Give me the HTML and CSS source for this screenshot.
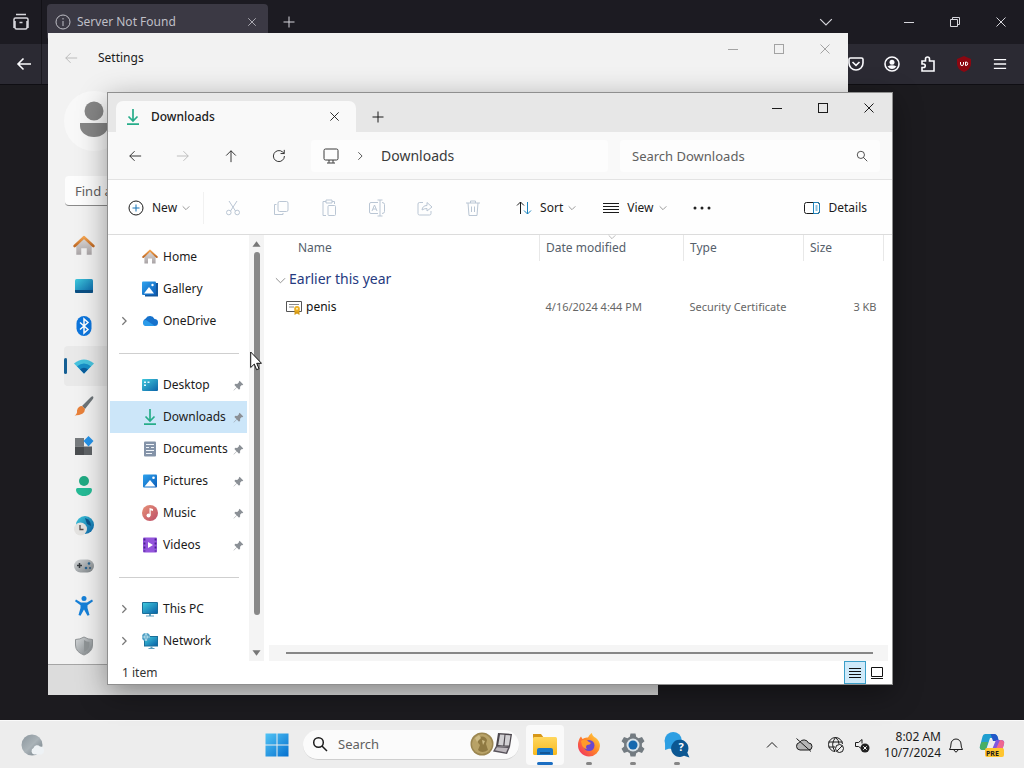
FILE: index.html
```html
<!DOCTYPE html>
<html lang="en">
<head>
<meta charset="utf-8">
<title>Desktop</title>
<link rel="stylesheet" href="styles.css">
</head>
<body>
<svg class="defs" width="0" height="0" aria-hidden="true">
  <defs>
    <linearGradient id="g-roof" x1="0" y1="0" x2="0" y2="1"><stop offset="0" stop-color="#f3a34f"/><stop offset="1" stop-color="#c06a25"/></linearGradient>
    <linearGradient id="g-wall" x1="0" y1="0" x2="0" y2="1"><stop offset="0" stop-color="#dcd8d6"/><stop offset="1" stop-color="#a9a4a6"/></linearGradient>
    <linearGradient id="g-teal" x1="0" y1="0" x2="1" y2="1"><stop offset="0" stop-color="#3fc9dc"/><stop offset="1" stop-color="#0b63a8"/></linearGradient>
    <linearGradient id="g-blue" x1="0" y1="0" x2="1" y2="1"><stop offset="0" stop-color="#2fa3ee"/><stop offset="1" stop-color="#0a5cb8"/></linearGradient>
    <linearGradient id="g-win" x1="0" y1="0" x2="1" y2="1"><stop offset="0" stop-color="#52c4f5"/><stop offset="1" stop-color="#0570cf"/></linearGradient>
    <linearGradient id="g-music" x1="0" y1="0" x2="1" y2="1"><stop offset="0" stop-color="#e79277"/><stop offset="1" stop-color="#bd4d68"/></linearGradient>
    <linearGradient id="g-fire" x1="1" y1="0" x2="0" y2="1"><stop offset="0" stop-color="#ffe14a"/><stop offset=".45" stop-color="#ff8a26"/><stop offset="1" stop-color="#f0246a"/></linearGradient>
    <linearGradient id="g-folder" x1="0" y1="0" x2="0" y2="1"><stop offset="0" stop-color="#ffd75e"/><stop offset="1" stop-color="#f7b91e"/></linearGradient>
    <linearGradient id="g-gray" x1="0" y1="0" x2="1" y2="1"><stop offset="0" stop-color="#d5d8da"/><stop offset="1" stop-color="#7d8386"/></linearGradient>
    <linearGradient id="g-moon" x1="0" y1="0" x2="1" y2="1"><stop offset="0" stop-color="#8b969d"/><stop offset=".5" stop-color="#aab3b8"/><stop offset="1" stop-color="#6f7a82"/></linearGradient>
  </defs>
  <symbol id="min" viewBox="0 0 12 12"><path d="M1 6.5h10"/></symbol>
  <symbol id="max" viewBox="0 0 12 12"><rect x="1.5" y="1.5" width="9" height="9"/></symbol>
  <symbol id="close" viewBox="0 0 12 12"><path d="M1.5 1.5l9 9M10.500 1.500l-9 9"/></symbol>
  <symbol id="restore" viewBox="0 0 12 12"><path d="M1.500 3.500h7v7h-7zM3.500 3.500v-2h7v7h-2"/></symbol>
  <symbol id="plus" viewBox="0 0 12 12"><path d="M6 .5v11M.5 6h11"/></symbol>
  <symbol id="left" viewBox="0 0 16 16"><path d="M15 8H2M7.500 2.500L2 8l5.500 5.500"/></symbol>
  <symbol id="right" viewBox="0 0 16 16"><path d="M1 8h13M8.500 2.500L14 8l-5.500 5.500"/></symbol>
  <symbol id="up" viewBox="0 0 16 16"><path d="M8 15V2M2.500 7.500L8 2l5.500 5.500"/></symbol>
  <symbol id="chev-d" viewBox="0 0 12 12"><path d="M1 3.500l5 5 5-5"/></symbol>
  <symbol id="chev-r" viewBox="0 0 12 12"><path d="M4 1.500L8.500 6 4 10.500"/></symbol>
  <symbol id="lens" viewBox="0 0 16 16"><circle cx="6.500" cy="6.500" r="4.800"/><path d="M10 10l5 5"/></symbol>
  <symbol id="pin" viewBox="0 0 12 12"><path fill="#8b9096" stroke="none" d="M7.200.8l4 4-1 .8-.6-.1-1.900 1.900.1 2-1.200 1.100-2.400-2.400L.9 11.400l-.3-.3 3.300-3.300L1.500 5.400l1.100-1.200 2 .1 1.900-1.900-.1-.6z"/></symbol>
  <symbol id="house" viewBox="0 0 20 20"><path fill="url(#g-wall)" d="M3 9l7-6 7 6v9h-4.500v-6h-5v6H3z"/><path fill="none" stroke="url(#g-roof)" stroke-width="2.400" stroke-linejoin="round" stroke-linecap="round" d="M1.500 10L10 2l8.500 8"/></symbol>
  <symbol id="down-arrow" viewBox="0 0 16 16"><path fill="none" stroke="#27ad8a" stroke-width="1.700" d="M8 0v11.500M3.500 7.500L8 12l4.500-4.500M2 15.100h12"/></symbol>
  <symbol id="picture" viewBox="0 0 16 16"><rect x="1" y="1.500" width="14" height="13" rx="1" fill="url(#g-blue)"/><path fill="#fff" d="M2.500 13.500L8 7l5.500 6.500z"/><circle cx="11.500" cy="4.800" r="1.300" fill="#fff"/></symbol>
</svg>

<main class="desktop">
  <section class="firefox" aria-label="Browser">
    <div class="ff-tabs">
      <button class="ff-archive" aria-label="Recent"><svg viewBox="0 0 18 18" width="18" height="18"><path d="M4 1.500h10M3 8v6.500A1.500 1.500 0 0 0 4.500 16h9a1.500 1.500 0 0 0 1.500-1.500V8M2 8V6.500A1.500 1.500 0 0 1 3.500 5h11A1.500 1.500 0 0 1 16 6.500V15M2 6v9M7.500 9.500h3"/></svg></button>
      <div class="ff-tab">
        <svg viewBox="0 0 16 16" width="16" height="16"><circle cx="8" cy="8" r="7"/><path d="M8 7v5M8 4v1.500"/></svg>
        <span>Server Not Found</span>
        <button aria-label="Close tab"><svg width="10" height="10"><use href="#close"/></svg></button>
      </div>
      <button class="ff-new" aria-label="New tab"><svg width="12" height="12"><use href="#plus"/></svg></button>
      <button class="ff-list" aria-label="List tabs"><svg width="14" height="14"><use href="#chev-d"/></svg></button>
      <div class="controls">
        <button aria-label="Minimize"><svg width="12" height="12"><use href="#min"/></svg></button>
        <button aria-label="Restore"><svg width="12" height="12"><use href="#restore"/></svg></button>
        <button aria-label="Close"><svg width="12" height="12"><use href="#close"/></svg></button>
      </div>
    </div>
    <div class="ff-nav">
      <button class="ff-back" aria-label="Back"><svg width="16" height="16"><use href="#left"/></svg></button>
      <div class="ff-tools">
        <button aria-label="Pocket"><svg viewBox="0 0 16 16" width="16" height="16"><path d="M2.500 2h11a1.500 1.500 0 0 1 1.500 1.500V7A7 7 0 0 1 1 7V3.500A1.500 1.500 0 0 1 2.500 2zM4.500 6L8 9.300 11.500 6"/></svg></button>
        <button aria-label="Account"><svg viewBox="0 0 16 16" width="16" height="16"><circle cx="8" cy="8" r="7"/><circle cx="8" cy="6.200" r="2.500" fill="currentColor" stroke="none"/><path fill="currentColor" stroke="none" d="M3.500 10.500q4.500-2.500 9 0Q8 15.500 3.500 10.500z"/></svg></button>
        <button aria-label="Extensions"><svg viewBox="0 0 16 16" width="16" height="16"><path d="M2 5h3.500V3a2 2 0 0 1 4 0v2H14v10H2v-3.500h1.500a1.700 1.700 0 0 0 0-3.500H2z"/></svg></button>
        <button class="ublock" aria-label="Blocker"><svg viewBox="0 0 16 16" width="16" height="16"><path class="shield" d="M8 0l7 3v5q0 5-7 8-7-3-7-8V3z"/><path class="mark" d="M4.500 6v2.200q0 1.300 1.500 1.300T7.500 8.200V6M9.500 6h.5q1.700 0 1.700 1.700T10 9.500h-.5z"/></svg></button>
        <button aria-label="Menu"><svg viewBox="0 0 16 16" width="14" height="14"><path d="M1 3h14M1 8h14M1 13h14"/></svg></button>
      </div>
    </div>
    <div class="ff-page"></div>
  </section>

  <section class="back-window" aria-label="Background window"></section>

  <section class="settings" aria-label="Settings">
    <header class="set-head">
      <button class="set-back" aria-label="Back"><svg width="14" height="14"><use href="#left"/></svg></button>
      <h1>Settings</h1>
      <div class="controls">
        <button aria-label="Minimize"><svg width="12" height="12"><use href="#min"/></svg></button>
        <button aria-label="Maximize"><svg width="12" height="12"><use href="#max"/></svg></button>
        <button aria-label="Close"><svg width="12" height="12"><use href="#close"/></svg></button>
      </div>
    </header>
    <div class="avatar"><svg viewBox="0 0 60 60" width="60" height="60"><circle cx="30" cy="30" r="30" fill="#f8f8f8"/><circle cx="30" cy="20" r="9.500" fill="#868686"/><path fill="#868686" d="M16 32h28v3c0 6-6 11-14 11s-14-5-14-11z"/></svg></div>
    <input class="find" type="search" placeholder="Find a setting" aria-label="Find a setting">
    <nav class="set-nav">
      <a href="#home" aria-label="Home"><svg width="22" height="22"><use href="#house"/></svg></a>
      <a href="#system" aria-label="System"><svg viewBox="0 0 20 20" width="20" height="20"><rect x="1" y="3" width="18" height="14" rx="1.500" fill="url(#g-teal)"/><path fill="#0b4f83" d="M1 14h18v1.500a1.500 1.500 0 0 1-1.500 1.500h-15A1.500 1.500 0 0 1 1 15.500z"/></svg></a>
      <a href="#bluetooth" aria-label="Bluetooth"><svg viewBox="0 0 20 20" width="20" height="20"><rect x="2.500" y="0" width="15" height="20" rx="7.500" fill="#0d75dc"/><path fill="none" stroke="#fff" stroke-width="1.500" d="M6 6.500l8 7-4 3.500V3l4 3.500-8 7"/></svg></a>
      <a class="current" href="#network" aria-label="Network"><svg viewBox="0 0 20 20" width="20" height="20"><path fill="#48c3de" d="M0 7.500Q10-.5 20 7.500L10 17.500z"/><path fill="#198fc8" d="M3 10.300q7-5.500 14 0L10 17.500z"/><path fill="#0b5c9c" d="M6 13.200q4-3 8 0l-4 4.300z"/></svg></a>
      <a href="#personal" aria-label="Personalization"><svg viewBox="0 0 20 20" width="20" height="20"><path fill="#6d7478" d="M19 .5q1 1-.5 3L11 13l-3-3 8-8q2-2.300 3-1.500z"/><path fill="#e8813a" d="M8 10l3 3q0 6-10.500 6.500Q3.500 18 3 14.500 4 10 8 10z"/></svg></a>
      <a href="#apps" aria-label="Apps"><svg viewBox="0 0 20 20" width="20" height="20"><path fill="#777b7e" d="M1 2h9v8.500H1z"/><path fill="#4b4e51" d="M1 10.500h9V19H1z"/><path fill="#5f6366" d="M10 10.500h8V19h-8z"/><path fill="#2492e8" d="M14.500 0l5 5-5 5.500-5-5.500z"/></svg></a>
      <a href="#accounts" aria-label="Accounts"><svg viewBox="0 0 20 20" width="20" height="20"><circle cx="10" cy="5" r="5" fill="#20aa83"/><path fill="#25bb96" d="M2 13.500A1.500 1.500 0 0 1 3.500 12h13a1.500 1.500 0 0 1 1.500 1.500c0 4-3.500 6.500-8 6.500s-8-2.500-8-6.500z"/></svg></a>
      <a href="#time" aria-label="Time"><svg viewBox="0 0 20 20" width="20" height="20"><circle cx="11" cy="9" r="9" fill="url(#g-teal)"/><path fill="#0b568c" d="M11 2q6 2 6 8l-4-2z"/><circle cx="6.500" cy="13" r="6.500" fill="#e4e3e1"/><path fill="none" stroke="#574d4b" stroke-width="1.300" d="M6 9v4.500h3.500"/></svg></a>
      <a href="#gaming" aria-label="Gaming"><svg viewBox="0 0 20 20" width="20" height="20"><rect y="3.500" width="20" height="13" rx="6.500" fill="url(#g-gray)"/><path fill="none" stroke="#34393d" stroke-width="1.500" d="M3 9.500h5M5.500 7v5"/><circle cx="12" cy="12" r="1.300" fill="#27618d"/><circle cx="15" cy="7.500" r="1.300" fill="#27618d"/><circle cx="16" cy="12" r="1" fill="#315777"/></svg></a>
      <a href="#access" aria-label="Accessibility"><svg viewBox="0 0 20 20" width="20" height="20"><circle cx="10" cy="2.500" r="2.500" fill="#1681d9"/><path fill="#1681d9" d="M2 3.500l5 3h6l5-3 1 1.700-5.500 4V12l2 7-2 .8L10 13.500l-3.500 6.300-2-.8 2-7V9.200L1 5.200z"/></svg></a>
      <a href="#privacy" aria-label="Privacy"><svg viewBox="0 0 20 20" width="20" height="20"><path fill="url(#g-gray)" stroke="#909496" d="M10 1q4 2.500 8.500 2.500V9q0 7-8.500 10Q1.500 16 1.500 9V3.500Q6 3.500 10 1z"/><path fill="#8f9496" d="M10 4v12q5-2 5.500-7V6Q12.500 6 10 4z"/></svg></a>
    </nav>
  </section>

  <section class="explorer" aria-label="Downloads">
    <header class="ex-head">
      <div class="ex-tab">
        <svg width="16" height="16"><use href="#down-arrow"/></svg>
        <span>Downloads</span>
        <button aria-label="Close tab"><svg width="11" height="11"><use href="#close"/></svg></button>
      </div>
      <button class="ex-new" aria-label="New tab"><svg width="12" height="12"><use href="#plus"/></svg></button>
      <div class="controls">
        <button aria-label="Minimize"><svg width="12" height="12"><use href="#min"/></svg></button>
        <button aria-label="Maximize"><svg width="12" height="12"><use href="#max"/></svg></button>
        <button aria-label="Close"><svg width="12" height="12"><use href="#close"/></svg></button>
      </div>
    </header>

    <div class="ex-nav">
      <button aria-label="Back"><svg width="14" height="14"><use href="#left"/></svg></button>
      <button class="off" aria-label="Forward"><svg width="14" height="14"><use href="#right"/></svg></button>
      <button aria-label="Up"><svg width="14" height="14"><use href="#up"/></svg></button>
      <button aria-label="Refresh"><svg viewBox="0 0 16 16" width="14" height="14"><path d="M14.200 8A6.300 6.300 0 1 1 12 3.300l2 1.900M14 1v4.200H9.800"/></svg></button>
      <div class="address">
        <svg viewBox="0 0 16 16" width="16" height="16"><rect x="1" y="1" width="14" height="11" rx="1.500"/><path d="M6 12v2.800M10 12v2.800M4 15h8"/></svg>
        <svg width="10" height="10"><use href="#chev-r"/></svg>
        <span>Downloads</span>
      </div>
      <label class="search"><input type="text" placeholder="Search Downloads" aria-label="Search Downloads"><svg width="12" height="12"><use href="#lens"/></svg></label>
    </div>

    <div class="toolbar">
      <button class="t-new"><svg viewBox="0 0 16 16" width="16" height="16"><circle cx="8" cy="8" r="7"/><path stroke="#1773b5" d="M8 4.500v7M4.500 8h7"/></svg>New<svg class="caret" width="8" height="8"><use href="#chev-d"/></svg></button>
      <div class="t-icons">
        <button disabled aria-label="Cut"><svg viewBox="0 0 16 16" width="16" height="16"><path d="M4 1l6.500 10M12 1L5.500 11"/><circle cx="3.800" cy="12.500" r="2.300"/><circle cx="12.200" cy="12.500" r="2.300"/></svg></button>
        <button disabled aria-label="Copy"><svg viewBox="0 0 16 16" width="16" height="16"><rect x="5" y="1.500" width="10" height="10" rx="1.500"/><path d="M3.500 4.500H1.500v10h8.500v-1.500"/></svg></button>
        <button disabled aria-label="Paste"><svg viewBox="0 0 16 18" width="16" height="18"><path d="M5 16.500H2v-14h3M11 2.500h2.500V5M5 1h6v3H5z"/><rect x="7" y="6.500" width="7.500" height="10" rx="1"/></svg></button>
        <button disabled aria-label="Rename"><svg viewBox="0 0 18 18" width="18" height="18"><path d="M10 3.500H3A1.500 1.500 0 0 0 1.500 5v8A1.500 1.500 0 0 0 3 14.500h7M14 3.500q2.500 0 2.500 2v7q0 2-2.500 2M9.500 1h5M12 1v16M9.500 17h5M4 12l2.500-6L9 12M5 10h3"/></svg></button>
        <button disabled aria-label="Share"><svg viewBox="0 0 16 16" width="16" height="16"><path d="M6 2.500H2.500A1.500 1.500 0 0 0 1 4v9.500A1.500 1.500 0 0 0 2.500 15h10a1.500 1.500 0 0 0 1.500-1.500V11M5 10q.5-4.500 5-4.500v-3L15 7l-5 4V8.500Q7 8.500 5 10z"/></svg></button>
        <button disabled aria-label="Delete"><svg viewBox="0 0 16 18" width="16" height="18"><path d="M1 4h14M5.500 4V2h5v2M3 4l1 12.500h8L13 4M6.500 7.500v5.500M9.500 7.500v5.500"/></svg></button>
      </div>
      <button class="t-sort"><svg viewBox="0 0 16 16" width="16" height="16"><path d="M4.500 14V2M1 5.500L4.500 2 8 5.500"/><path stroke="#1b83bd" d="M11.500 2v12M8 10.500l3.500 3.500 3.500-3.500"/></svg>Sort<svg class="caret" width="8" height="8"><use href="#chev-d"/></svg></button>
      <button class="t-view"><svg viewBox="0 0 16 16" width="16" height="16"><path d="M0 3.500h16M0 6.500h16M0 9.500h16M0 12.500h16"/></svg>View<svg class="caret" width="8" height="8"><use href="#chev-d"/></svg></button>
      <button class="t-more" aria-label="More"><svg viewBox="0 0 18 4" width="18" height="4"><g fill="#222" stroke="none"><circle cx="2" cy="2" r="1.500"/><circle cx="9" cy="2" r="1.500"/><circle cx="16" cy="2" r="1.500"/></g></svg></button>
      <button class="t-details"><svg viewBox="0 0 16 16" width="16" height="16"><rect x=".5" y="2.500" width="15" height="11" rx="2"/><path stroke="#1b83bd" d="M9.500 2.500h4q2 0 2 2v7q0 2-2 2h-4zM11.500 6h2M11.500 8h2M11.500 10h2"/></svg>Details</button>
    </div>

    <div class="ex-body">
      <nav class="tree">
        <a href="#h"><i></i><svg width="16" height="16"><use href="#house"/></svg><span>Home</span></a>
        <a href="#g"><i></i><svg viewBox="0 0 16 16" width="16" height="16"><path fill="#13569c" d="M3 2h13v13.500H3z"/><rect y=".5" width="14" height="13.500" rx="1" fill="url(#g-blue)"/><path fill="#fff" d="M2 12.500L7 6l5 6.500z"/><circle cx="10.500" cy="4" r="1.200" fill="#fff"/></svg><span>Gallery</span></a>
        <a href="#o"><i><svg width="10" height="10"><use href="#chev-r"/></svg></i><svg viewBox="0 0 16 16" width="16" height="16"><path fill="#1672cc" d="M4 13a4 4 0 0 1-.3-7.500A5 5 0 0 1 12.500 6 3.500 3.500 0 0 1 12.500 13z"/><path fill="#2b9bea" d="M4 13a3 3 0 0 1 0-6l9 5.900z"/></svg><span>OneDrive</span></a>
        <hr>
        <a href="#d"><i></i><svg viewBox="0 0 16 16" width="16" height="16"><rect y="2" width="16" height="12" rx="1" fill="url(#g-teal)"/><path fill="#e5f8ff" d="M2 4.500h2v1.500H2zM2 7.500h2V9H2zM5.500 4.500h2v1.500h-2z"/></svg><span>Desktop</span><svg class="pin" width="11" height="11"><use href="#pin"/></svg></a>
        <a class="current" href="#dl"><i></i><svg width="16" height="16"><use href="#down-arrow"/></svg><span>Downloads</span><svg class="pin" width="11" height="11"><use href="#pin"/></svg></a>
        <a href="#doc"><i></i><svg viewBox="0 0 16 16" width="16" height="16"><rect x="2" y=".5" width="12" height="15" rx="1" fill="#8493a8"/><path fill="none" stroke="#f0f4f9" d="M4 3.500h8M4 6.500h3M9 6.500h3M4 9.500h8M4 12.500h6"/></svg><span>Documents</span><svg class="pin" width="11" height="11"><use href="#pin"/></svg></a>
        <a href="#pic"><i></i><svg width="16" height="16"><use href="#picture"/></svg><span>Pictures</span><svg class="pin" width="11" height="11"><use href="#pin"/></svg></a>
        <a href="#mus"><i></i><svg viewBox="0 0 16 16" width="16" height="16"><circle cx="8" cy="8" r="8" fill="url(#g-music)"/><circle cx="6.500" cy="10.500" r="2" fill="#fff"/><path fill="#fff" d="M7.500 3l3.500 1v2l-2.300-.7v5.200H7.500z"/></svg><span>Music</span><svg class="pin" width="11" height="11"><use href="#pin"/></svg></a>
        <a href="#vid"><i></i><svg viewBox="0 0 16 16" width="16" height="16"><rect x="1" y=".5" width="14" height="15" rx="1" fill="#9455dc"/><path fill="none" stroke="#4a2390" stroke-width="1.800" stroke-dasharray="2 2" d="M2.500 1.500v13M13.500 1.500v13"/><path fill="#fff" d="M6 5l5 3-5 3z"/></svg><span>Videos</span><svg class="pin" width="11" height="11"><use href="#pin"/></svg></a>
        <hr>
        <a href="#pc"><i><svg width="10" height="10"><use href="#chev-r"/></svg></i><svg viewBox="0 0 16 16" width="16" height="16"><rect y="1" width="16" height="12" rx="1" fill="#1b6f99"/><path fill="url(#g-teal)" d="M1 2h14v10H1z"/><path fill="#5b9dbd" d="M7 13h2v1.500h3v1H4v-1h3z"/></svg><span>This PC</span></a>
        <a href="#net"><i><svg width="10" height="10"><use href="#chev-r"/></svg></i><svg viewBox="0 0 16 16" width="16" height="16"><path fill="#1b6f99" d="M2 3h14v10.500H2z"/><path fill="url(#g-teal)" d="M3 4h12v8.500H3z"/><circle cx="4" cy="4" r="4" fill="#4f9fc4"/><path fill="none" stroke="#c1e4f0" stroke-width=".8" d="M0 4h8M4 0q-3 4 0 8 3-4 0-8"/><path fill="#5b9dbd" d="M8.500 13.500h2V15h2v1H6.500v-1h2z"/></svg><span>Network</span></a>
      </nav>
      <div class="vscroll" aria-hidden="true"><svg viewBox="0 0 10 6" width="9" height="6"><path d="M5 0l4.500 6h-9z"/></svg><div class="vthumb"></div><svg class="last" viewBox="0 0 10 6" width="9" height="6"><path d="M5 6L.5 0h9z"/></svg></div>
      <div class="files">
        <table>
          <colgroup><col><col class="c-date"><col class="c-type"><col class="c-size"></colgroup>
          <thead><tr><th>Name</th><th><svg class="sorted" width="8" height="8"><use href="#chev-d"/></svg>Date modified</th><th>Type</th><th>Size</th></tr></thead>
          <tbody>
            <tr class="group"><th colspan="4"><svg width="11" height="11"><use href="#chev-d"/></svg>Earlier this year</th></tr>
            <tr><td><div class="name"><svg viewBox="0 0 16 16" width="16" height="16"><path fill="#fff" stroke="#555" d="M.5 2.500h15v10H.5z"/><path stroke="#8a8a8a" d="M3 5.500h10M3 8h5"/><path fill="#d49a16" d="M8.500 10.500h5V16l-2.500-1.500L8.500 16z"/><circle cx="11" cy="9.800" r="2.800" fill="#edb021"/><circle cx="11" cy="9.800" r="1" fill="#fff4c4"/></svg>penis</div></td><td>4/16/2024 4:44 PM</td><td>Security Certificate</td><td>3 KB</td></tr>
          </tbody>
        </table>
        <div class="hscroll" aria-hidden="true"><div></div></div>
      </div>
    </div>
    <footer class="status">
      <span>1 item</span>
      <button class="on" aria-label="Details view"><svg viewBox="0 0 12 12" width="12" height="12"><path d="M0 1.500h12M0 4.500h12M0 7.500h12M0 10.500h12"/></svg></button>
      <button aria-label="Large icons"><svg viewBox="0 0 12 12" width="12" height="12"><path d="M.5 .5h11v9H.5zM0 11.500h12"/></svg></button>
    </footer>
  </section>

  <svg class="pointer" viewBox="0 0 12 20" width="12" height="20"><path fill="#fff" stroke="#111" d="M.7 1v15.500l3.600-3.400 2.300 5.600 2.400-1-2.300-5.400h4.800z"/></svg>
</main>

<footer class="taskbar">
  <div class="tb-left"><button aria-label="Weather"><svg viewBox="0 0 24 24" width="24" height="24"><circle cx="12" cy="12" r="10.500" fill="url(#g-moon)"/><path fill="#eef2f5" d="M14 21.500a3.500 3.500 0 0 1-.5-6.500 3.800 3.800 0 0 1 6.500-1.500 4 4 0 0 1 0 8z"/></svg></button></div>
  <button class="start" aria-label="Start"><svg viewBox="0 0 24 24" width="24" height="24"><path fill="url(#g-win)" d="M.5 .5h11v11H.5zM12.500 .5h11v11h-11zM.5 12.500h11v11H.5zM12.500 12.500h11v11h-11z"/></svg></button>
  <label class="tb-search"><svg width="16" height="16"><use href="#lens"/></svg><input type="text" placeholder="Search" aria-label="Search">
    <svg class="art" viewBox="0 0 44 26" width="44" height="26"><circle cx="13" cy="13" r="11.500" fill="#9b8650"/><circle cx="13" cy="13" r="10" fill="#b8a267"/><path fill="#8f7942" d="M10 6q6-2 8 3l-1 4 2 6q-6 4-10 0l2-5q-4-3-1-8z"/><path fill="#cdbb85" d="M6 7l4-3 2 3-4 4zM13 9l3 1-2 4z"/><path fill="#4c474d" d="M29 2l14 1-2 13-14-1z"/><path fill="#d2d1d4" d="M31 3.500l4.500.3-1.300 10.700-5-.4zM36.500 4l5 .3-1.500 10.300-4.500-.2z"/><path fill="#57525a" d="M27 15l14 1-3 7-14-2.500z"/><path fill="#bdb8bd" d="M28 16.200l11 .8-2 4.500-11-2.200z"/></svg></label>
  <div class="apps">
    <button class="active" aria-label="File Explorer"><svg viewBox="0 0 26 24" width="26" height="24"><path fill="#d79718" d="M1 1h8l3 4v5H1z"/><rect x="1" y="4" width="24" height="18" rx="1.500" fill="url(#g-folder)"/><path fill="#1a78c8" d="M5 17a2 2 0 0 1 2-2h12a2 2 0 0 1 2 2v5H5z"/><path fill="#125696" d="M8 19h10v2H8z"/></svg></button>
    <button aria-label="Firefox"><svg viewBox="0 0 24 24" width="24" height="24"><path fill="url(#g-fire)" d="M12 23.500A11 11 0 0 1 1 12Q1 7 4 3.500L5.500 6Q8 4 11 4.500 12 1.500 15 0q0 3 4 5 4 3.500 4 8A11 11 0 0 1 12 23.500z"/><circle cx="12" cy="12.500" r="5.500" fill="#6b48cf"/><path fill="#ff9a2b" d="M4 8q4-3 8 1l2 1q-1 2-4 2-2 2 0 4-5 0-6-8z"/></svg></button>
    <button aria-label="Settings"><svg viewBox="0 0 24 24" width="24" height="24"><path fill="#737b81" d="M9.500.5h5l.7 3.300 2.400 1.400L21 4l2.500 4.300-2.600 2.300v2.800l2.600 2.300L21 20l-3.400-1.200-2.400 1.400-.7 3.300h-5l-.7-3.300-2.400-1.400L3 20 .5 15.700l2.600-2.300v-2.800L.5 8.300 3 4l3.400 1.200 2.400-1.400z"/><circle cx="12" cy="12" r="6.500" fill="#d9e2e8"/><circle cx="12" cy="12" r="4.500" fill="#1668ae"/></svg></button>
    <button aria-label="Get Help"><svg viewBox="0 0 24 24" width="26" height="26"><circle cx="8.500" cy="8" r="8" fill="#2d9fe3"/><path fill="#2d9fe3" d="M1 10v6.500l6-2z"/><path fill="#0c5792" d="M23.500 23.500l-5-1.500a8 8 0 1 1 3-3z"/></svg><b>?</b></button>
  </div>
  <div class="tray">
    <button aria-label="Hidden icons"><svg class="flip" width="12" height="12"><use href="#chev-d"/></svg></button>
    <button aria-label="OneDrive"><svg viewBox="0 0 18 16" width="18" height="16"><path fill="#b5b5b5" d="M5 13a3.800 3.800 0 0 1-.5-7.500 5 5 0 0 1 9 .5 3.500 3.500 0 0 1 0 7z"/><path d="M1.500 1.500l14.500 13"/></svg></button>
    <button aria-label="No internet"><svg viewBox="0 0 18 18" width="18" height="18"><path d="M8 15.500A7 7 0 1 1 15.500 8M1.500 6h14M1.500 11H8M8.500 1.500Q3 8 8 15.500M8.500 1.500Q12 4 12 8"/><circle cx="12.500" cy="12.500" r="4"/><path d="M10 15l5-5"/></svg></button>
    <button class="sound" aria-label="Muted"><svg viewBox="0 0 16 16" width="16" height="16"><path d="M8 12L4.500 9.500H1.500v-4h3L8 2.500v4"/><circle cx="11" cy="11" r="4.500" fill="#222" stroke="none"/><path stroke="#fff" d="M9.300 9.300l3.400 3.400M12.700 9.300l-3.400 3.400"/></svg></button>
    <button class="clock"><span>8:02 AM</span><span>10/7/2024</span></button>
    <button class="bell" aria-label="Notifications"><svg viewBox="0 0 16 16" width="16" height="16"><path d="M1.500 12.500Q3 10.500 3 7a5 5 0 0 1 10 0q0 3.500 1.500 5.500zM6 13q2 4 4 0"/></svg></button>
    <button class="copilot" aria-label="Copilot"><svg viewBox="0 0 26 24" width="26" height="24"><path fill="#209fd0" d="M6 1h9q3 0 4 4h-8L7 17H4q-4 0-3-4L3.500 3.500Q4 1 6 1z"/><path fill="#48ae63" d="M2.500 9H9l-2.500 8H4q-4 0-3-4z"/><path fill="#2358c9" d="M11.500 1H15q3 0 4 4l1 3h-6z"/><path fill="#8058dd" d="M17 7h5q4 0 3 4l-2.500 8H12z"/><path fill="#ee6690" d="M21 7q5 0 4 4l-2 7h-7z"/><rect x="6" y="15" width="19" height="9" rx="2" fill="#ffc52f"/></svg><b>PRE</b></button>
  </div>
</footer>
</body>
</html>
```
FILE: styles.css
```css
* { box-sizing: border-box; }
body {
  margin: 0;
  height: 100vh;
  display: flex;
  flex-direction: column;
  overflow: hidden;
  background: #1b1a20;
  color: #1b1b1b;
  font: 12px/16px "Noto Sans", "Open Sans", sans-serif;
}
.defs { position: absolute; }
svg { flex: none; fill: none; stroke: currentColor; display: block; }
button {
  margin: 0; padding: 0; border: 0; background: none;
  color: inherit; font: inherit;
  display: flex; align-items: center; justify-content: center;
  flex: none;
}
input { font: inherit; color: inherit; border: 0; background: none; padding: 0; min-width: 0; outline: 0; }
input::placeholder { color: #606060; opacity: 1; }
a { color: inherit; text-decoration: none; }
.controls { display: flex; margin-left: auto; }
.controls button { width: 46px; height: 100%; }

.desktop { flex: 1; position: relative; min-height: 0; }

/* Browser */
.firefox { height: 100%; display: flex; flex-direction: column; color: #fbfbfe; }
.ff-tabs { height: 44px; display: flex; align-items: stretch; background: #1c1b22; color: #d6d6dc; }
.ff-archive { width: 42px; border-right: 1px solid #121116; }
.ff-archive svg { stroke-width: 1.5; }
.ff-tab {
  margin: 4px 0 4px 5px; padding: 0 8px; width: 221px;
  display: flex; align-items: center; gap: 6px;
  background: #3b3944; border-radius: 4px; color: #bfbfc6;
}
.ff-tab button { width: 16px; height: 16px; margin-left: auto; }
.ff-new { width: 42px; }
.ff-list { width: 40px; margin-left: auto; }
.ff-tabs .controls { margin-left: 40px; }
.ff-nav { height: 40px; display: flex; justify-content: space-between; background: #2b2a33; }
.ff-nav svg { stroke-width: 1.6; }
.ff-back { width: 42px; border-right: 1px solid #1a191f; padding-left: 6px; }
.ff-tools { display: flex; padding-right: 6px; }
.ff-tools button { width: 36px; }
.shield { fill: #8b0711; stroke: none; }
.mark { stroke: #fff; stroke-width: 1; }
.ff-page { flex: 1; border-top: 1px solid #0f0e13; background: #1c1b1f; }

/* Windows lying on the desktop */
.back-window {
  position: absolute; left: 48px; right: 366px; top: 93px; bottom: 25px;
  background: #dcdcdc;
}
.settings {
  position: absolute; left: 48px; right: 176px; top: 33px; bottom: 55px;
  background: #f2f2f2; border-bottom: 1px solid #a5a5a5; overflow: hidden;
}
.set-head { height: 50px; display: flex; align-items: center; }
.set-head h1 { margin: 0 0 0 15px; font-size: 12px; font-weight: 400; }
.set-back { width: 24px; margin-left: 11px; color: #b4b4b4; }
.set-head .controls { height: 32px; align-self: flex-start; color: #a3a3a3; }
.avatar { padding: 8px 0 0 16px; }
.avatar svg { stroke: none; }
.find {
  display: block; width: 220px; height: 30px; margin: 25px 0 20px 17px; padding: 0 10px;
  background: #fdfdfd; border-bottom: 1px solid #8a8a8a; border-radius: 4px; font-size: 13px;
}
.set-nav { padding-left: 16px; width: 236px; }
.set-nav a { height: 40px; padding-left: 8px; display: flex; align-items: center; }
.set-nav a > svg { stroke: none; margin: 0 2px; }
.set-nav a > svg[width="22"] { margin: 0 1px; }
.set-nav .current { background: #e9e9e9; border-radius: 4px; padding-left: 5px; }
.set-nav .current::before { content: ""; width: 3px; height: 16px; margin-left: -5px; margin-right: 5px; background: #155f94; border-radius: 2px; }

.explorer {
  position: absolute; left: 108px; right: 132px; top: 93px; bottom: 36px;
  display: flex; flex-direction: column; background: #fff;
  outline: 1px solid #8f8f8f;
  box-shadow: 0 8px 28px rgba(0, 0, 0, .42);
}
.ex-head { height: 39px; display: flex; background: #e7e7e7; }
.ex-tab {
  width: 240px; margin: 8px 0 0 8px; padding: 0 14px 0 9px;
  display: flex; align-items: center; gap: 10px;
  background: #f9f9f9; border-radius: 7px 7px 0 0; font-weight: 500;
}
.ex-tab button { width: 16px; height: 16px; margin-left: auto; }
.ex-new { width: 44px; padding-top: 8px; }
.ex-head .controls { height: 29px; }
.ex-nav {
  height: 48px; padding: 0 12px 0 3px; display: flex; align-items: center;
  background: #f9f9f9; border-bottom: 1px solid #e3e3e3;
}
.ex-nav > button { width: 48px; height: 32px; }
.ex-nav .off { color: #b6b6b6; }
.address, .search { height: 32px; background: #fdfdfd; border-radius: 4px; display: flex; align-items: center; }
.address { flex: 285; margin-left: 8px; padding-left: 12px; gap: 16px; font-size: 14px; color: #3a3a3a; }
.search { flex: 236; margin-left: 12px; padding: 0 12px; font-size: 13px; }
.search input { flex: 1; }

.toolbar { height: 55px; display: flex; align-items: center; padding: 2px 25px 0 20px; border-bottom: 1px solid #dcdcdc; background: #fefefe; }
.toolbar button { height: 32px; gap: 8px; }
.caret { color: #999; stroke-width: 1.5; margin-left: -3px; }
.t-icons { display: flex; margin-left: 13px; padding-left: 5px; border-left: 1px solid #f1f1f1; }
.t-icons button { width: 48px; color: #bac6d4; }
.t-sort { margin-left: 19px; }
.t-view { margin-left: 27px; }
.t-more { margin-left: 26px; }
.t-details { margin-left: auto; }

.ex-body { flex: 1; min-height: 0; display: flex; }
.tree { width: 139px; padding: 6px 0 0 2px; overflow: hidden; }
.tree a { height: 32px; display: flex; align-items: center; gap: 5px; padding-right: 3px; }
.tree i { width: 27px; display: flex; justify-content: center; color: #777; stroke-width: 1.5; }
.tree a > svg { stroke: none; }
.tree .pin { margin-left: auto; }
.tree .current { background: #cce6f9; }
.tree hr { margin: 16px 8px 15px 9px; border: 0; border-top: 1px solid #cfcfcf; }
.vscroll { width: 15px; margin-left: 2px; padding: 6px 0 5px; display: flex; flex-direction: column; align-items: center; gap: 5px; background: #f4f4f4; }
.vscroll svg { fill: #777; stroke: none; }
.vthumb { flex: 1; width: 6px; margin-bottom: 30px; border-radius: 3px; background: #878787; }
.files { flex: 1; min-width: 0; display: flex; flex-direction: column; padding: 0 4px 0 5px; }
table { width: calc(100% - 4px); table-layout: fixed; border-collapse: collapse; color: #666; }
.c-date { width: 144px; }
.c-type { width: 120px; }
.c-size { width: 80px; }
thead th { height: 26px; padding: 0 6px; text-align: left; font-weight: 400; color: #55606b; border-right: 1px solid #e8e8e8; position: relative; }
thead th:first-child { padding-left: 29px; }
.sorted { position: absolute; left: 50%; top: -2px; margin-left: -4px; color: #999; }
.group th { height: 36px; padding: 0 0 0 6px; text-align: left; font-size: 14px; font-weight: 400; color: #263a80; }
.group svg { display: inline-block; vertical-align: middle; margin-right: 3px; color: #888; }
td { height: 20px; padding: 0 6px; white-space: nowrap; font-size: 11px; }
td:last-child { text-align: right; padding-right: 7px; }
td:first-child { padding-left: 17px; color: #111; font-size: 12px; }
.name { display: flex; align-items: center; gap: 4px; }
.name svg { stroke: none; }
.hscroll { height: 16px; margin-top: auto; padding: 7px 15px 0 17px; background: #f5f5f5; }
.hscroll div { height: 2px; background: #878787; }
.status { height: 23px; padding: 0 4px 0 14px; display: flex; align-items: center; color: #333; }
.status span { margin-right: auto; }
.status button { width: 22px; height: 23px; color: #111; }
.status .on { background: #cfeafa; outline: 1px solid #3c9fc9; outline-offset: -1px; }
.pointer { position: absolute; left: 250px; top: 351px; }

/* Taskbar */
.taskbar { flex: none; height: 48px; display: flex; align-items: center; background: #ededed; border-top: 1px solid #fafafa; }
.taskbar button { height: 40px; }
.tb-left { flex: 0 1 25%; padding-left: 20px; }
.tb-left svg, .start svg, .apps svg, .copilot svg { stroke: none; }
.start { width: 41px; }
.tb-search { width: 216px; height: 30px; margin: 0 7px 0 6px; padding: 0 6px 0 9px; display: flex; align-items: center; gap: 10px; background: #fbfbfb; border-radius: 15px; border-bottom: 1px solid #cfcfcf; font-size: 13px; }
.tb-search > svg:first-child { stroke-width: 1.5; }
.tb-search input { flex: 1; }
.tb-search .art { stroke: none; }
.apps { display: flex; gap: 6px; }
.apps button { width: 38px; position: relative; border-radius: 4px; }
.apps .active { background: #fafafa; }
.apps button::after { content: ""; position: absolute; bottom: 0; left: 50%; width: 6px; height: 3px; margin-left: -3px; border-radius: 2px; background: #858585; }
.apps .active::after { width: 16px; margin-left: -8px; background: #1b6ec2; }
.apps b { position: absolute; left: 19px; top: 14px; width: 8px; color: #fff; font-size: 11px; line-height: 16px; }
.tray { margin-left: auto; padding-right: 15px; display: flex; align-items: center; }
.tray button { width: 32px; }
.flip { transform: rotate(180deg); }
.tray .sound { width: 20px; }
.tray .clock { width: auto; margin-left: 12px; flex-direction: column; align-items: flex-end; font-size: 12px; }
.tray .bell { width: 30px; }
.tray .copilot { width: 34px; position: relative; margin-left: 4px; }
.copilot b { position: absolute; left: 11px; top: 24px; font: 700 7px/9px "Noto Sans", sans-serif; }
```
